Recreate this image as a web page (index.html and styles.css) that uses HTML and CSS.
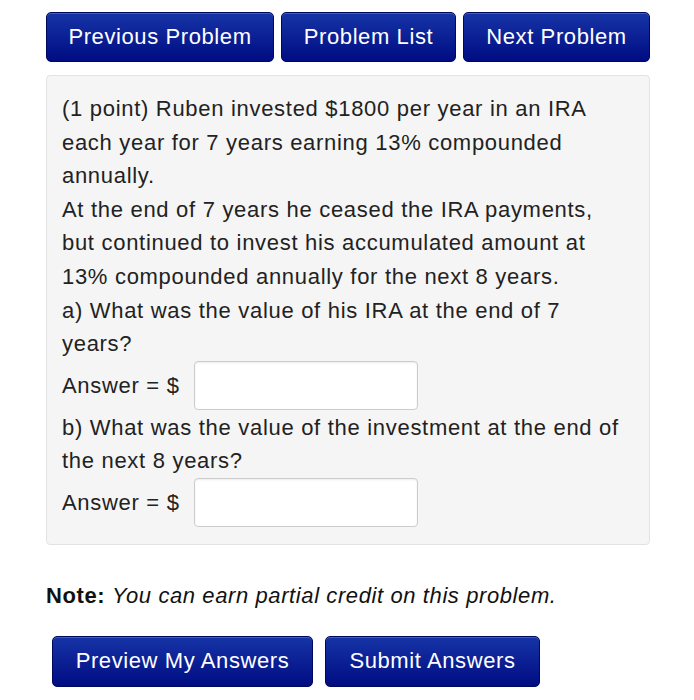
FILE: index.html
```html
<!DOCTYPE html>
<html lang="en">
<head>
  <meta charset="UTF-8">
  <title>Problem</title>
  <link rel="stylesheet" href="styles.css">
</head>
<body>

  <!-- Navigation -->
  <div class="nav">
    <button class="button">Previous Problem</button>
    <button class="button">Problem List</button>
    <button class="button">Next Problem</button>
  </div>

  <!-- Problem Box -->
  <div class="problem">
    <p>(1 point) Ruben invested $1800 per year in an IRA each year for 7 years earning 13% compounded annually.</p>
    <p>At the end of 7 years he ceased the IRA payments, but continued to invest his accumulated amount at 13% compounded annually for the next 8 years.</p>
    <p>a) What was the value of his IRA at the end of 7 years?</p>
    <div class="answer-row">
      <label>Answer = $</label>
      <input type="text" class="answer">
    </div>
    <p>b) What was the value of the investment at the end of the next 8 years?</p>
    <div class="answer-row">
      <label>Answer = $</label>
      <input type="text" class="answer">
    </div>
  </div>

  <p class="note"><strong>Note:</strong> <em>You can earn partial credit on this problem.</em></p>

  <div class="submit-row">
    <button class="button">Preview My Answers</button>
    <button class="button">Submit Answers</button>
  </div>

</body>
</html>
```

FILE: styles.css
```css
/* Reset */
* {
  margin: 0;
  padding: 0;
  box-sizing: border-box;
  font-family: "Liberation Sans", Arial, sans-serif;
}

body {
  background-color: #fff;
  color: #222;
  padding: 12px 44px 0 46px;
  width: 694px;
}

/* Buttons */
.button {
  height: 50px;
  padding: 0;
  font-size: 22px;
  letter-spacing: 0.6px;
  color: #fff;
  background: linear-gradient(#1634a6, #000c82);
  border: 1px solid #00075e;
  border-radius: 5px;
  box-shadow: inset 0 1px 0 rgba(255, 255, 255, 0.2);
  cursor: pointer;
}

.nav {
  display: flex;
  gap: 7px;
}

.nav .button:nth-child(1) { width: 228px; }
.nav .button:nth-child(2) { width: 175px; }
.nav .button:nth-child(3) { width: 187px; }

/* Problem Box */
.problem {
  margin-top: 13px;
  width: 604px;
  padding: 16px 23px 16px 15px;
  background-color: #f5f5f5;
  border: 1px solid #e3e3e3;
  border-radius: 4px;
  font-size: 22px;
  letter-spacing: 0.7px;
  line-height: 33.6px;
}

.answer-row {
  display: flex;
  align-items: center;
  gap: 14px;
  height: 50px;
}

.answer {
  width: 224px;
  height: 49px;
  background-color: #fff;
  border: 1px solid #ccc;
  border-radius: 4px;
  box-shadow: inset 0 1px 2px rgba(0, 0, 0, 0.08);
  font-size: 20px;
  padding: 0 8px;
}

/* Note */
.note {
  margin-top: 38px;
  font-size: 22px;
  letter-spacing: 0.6px;
  color: #111;
}

/* Submit */
.submit-row {
  display: flex;
  gap: 12px;
  margin: 27px 0 0 6px;
}

.submit-row .button {
  height: 51px;
}

.submit-row .button:nth-child(1) { width: 261px; }
.submit-row .button:nth-child(2) { width: 215px; }
```
